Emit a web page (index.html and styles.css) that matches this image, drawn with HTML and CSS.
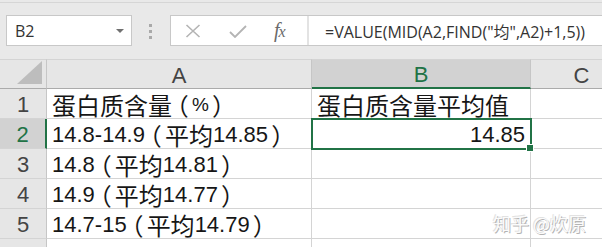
FILE: index.html
```html
<!DOCTYPE html>
<html lang="zh-CN">
<head>
<meta charset="utf-8">
<title>Excel</title>
<link rel="stylesheet" href="styles.css">
</head>
<body>
<div class="app">
  <div class="toolbar">
    <div class="namebox">
      <span class="namebox-text">B2</span>
      <span class="namebox-arrow"></span>
    </div>
    <div class="grip"><i></i><i></i><i></i></div>
    <div class="formula">
      <div class="formula-icons">
        <svg class="ico ico-x" width="16" height="14" viewBox="0 0 16 14"><path d="M1.5 1 L14.5 13 M14.5 1 L1.5 13" stroke="#b4b4b4" stroke-width="1.6" fill="none"/></svg>
        <svg class="ico ico-ok" width="18" height="13" viewBox="0 0 18 13"><path d="M1 7 L6 12 L17 1" stroke="#b4b4b4" stroke-width="1.8" fill="none"/></svg>
        <span class="fx">f<span class="fx-x">x</span></span>
      </div>
      <div class="formula-text">=VALUE(MID(A2,FIND("均",A2)+1,5))</div>
    </div>
  </div>

  <div class="sheet">
    <div class="corner"><svg width="26" height="24" viewBox="0 0 26 24"><polygon points="25,0 25,23 0,23" fill="#bdbdbd"/></svg></div>
    <div class="colhead">A</div>
    <div class="colhead is-sel">B</div>
    <div class="colhead">C</div>

    <div class="rowhead">1</div>
    <div class="cell"><span class="zh">蛋白质含量</span><span class="zh paren">（</span><span class="pct">%</span><span class="zh paren">）</span></div>
    <div class="cell"><span class="zh">蛋白质含量平均值</span></div>
    <div class="cell"></div>

    <div class="rowhead is-sel">2</div>
    <div class="cell">14.8-14.9<span class="zh paren">（</span><span class="zh">平均</span>14.85<span class="zh paren">）</span></div>
    <div class="cell num is-active">14.85</div>
    <div class="cell"></div>

    <div class="rowhead">3</div>
    <div class="cell">14.8<span class="zh paren">（</span><span class="zh">平均</span>14.81<span class="zh paren">）</span></div>
    <div class="cell"></div>
    <div class="cell"></div>

    <div class="rowhead">4</div>
    <div class="cell">14.9<span class="zh paren">（</span><span class="zh">平均</span>14.77<span class="zh paren">）</span></div>
    <div class="cell"></div>
    <div class="cell"></div>

    <div class="rowhead">5</div>
    <div class="cell">14.7-15<span class="zh paren">（</span><span class="zh">平均</span>14.79<span class="zh paren">）</span></div>
    <div class="cell"></div>
    <div class="cell"></div>

    <div class="rowhead"></div>
    <div class="cell"></div>
    <div class="cell"></div>
    <div class="cell"></div>
  </div>

  <div class="watermark">知乎 @炊原</div>
</div>
</body>
</html>
```

FILE: styles.css
```css
* { box-sizing: border-box; }
html, body { margin: 0; padding: 0; }
body {
  width: 602px;
  height: 247px;
  overflow: hidden;
  background: #ffffff;
  font-family: "Liberation Sans", "Noto Sans CJK SC", sans-serif;
}
.app {
  position: relative;
  width: 602px;
  height: 247px;
  overflow: hidden;
  background: #e9e9e9;
  padding-top: 2px;
}

/* toolbar */
.toolbar {
  height: 57px;
  border-top: 1px solid #d6d6d6;
  display: flex;
  align-items: flex-start;
  padding: 12px 0 0 6px;
}
.namebox {
  width: 126px;
  height: 31px;
  background: #fff;
  border: 1px solid #c8c8c8;
  display: flex;
  align-items: center;
  justify-content: space-between;
  padding: 0 7px 0 8px;
}
.namebox-text {
  font-family: "Open Sans", "Noto Sans", sans-serif;
  font-size: 16px;
  color: #333;
}
.namebox-arrow {
  width: 0; height: 0;
  border-left: 4px solid transparent;
  border-right: 4px solid transparent;
  border-top: 4px solid #707070;
  margin-top: 1px;
}
.grip {
  width: 4px;
  margin: 9px 17px 0 17px;
  display: flex;
  flex-direction: column;
  gap: 3px;
}
.grip i {
  display: block;
  width: 3px; height: 3px;
  background: #a9a9a9;
}
.formula {
  flex: 1;
  height: 31px;
  display: flex;
  border: 1px solid #c8c8c8;
  border-right: none;
  background: #fff;
}
.formula-icons {
  width: 136px;
  display: flex;
  align-items: center;
  padding-left: 14px;
}
.ico-x { margin-right: 28px; }
.ico-ok { margin-right: 27px; margin-top: 1px; }
.fx {
  font-family: "Liberation Serif", serif;
  font-style: italic;
  font-size: 20px;
  color: #6a6a6a;
  letter-spacing: -1px;
}
.fx-x { font-size: 16px; }
.formula-text {
  flex: 1;
  border-left: 2px solid #e3e3e3;
  padding-left: 16px;
  display: flex;
  align-items: center;
  font-family: "Open Sans", "Noto Sans CJK SC", sans-serif;
  font-size: 16px;
  color: #333;
  white-space: nowrap;
}

/* sheet */
.sheet {
  display: grid;
  grid-template-columns: 47px 265px 219px 102px;
  grid-template-rows: 30px repeat(6, 30px);
}
.corner {
  background: #e6e6e6;
  border-top: 1px solid #d4d4d4;
  border-right: 1px solid #c6c6c6;
  border-bottom: 1px solid #ababab;
  display: flex;
  align-items: flex-end;
  justify-content: flex-end;
  padding: 0 3px 3px 0;
}
.corner svg { display: block; }
.colhead {
  background: #e6e6e6;
  border-top: 1px solid #d4d4d4;
  border-right: 1px solid #c6c6c6;
  border-bottom: 1px solid #ababab;
  display: flex;
  align-items: center;
  justify-content: center;
  font-size: 22px;
  line-height: 24px;
  color: #444;
  padding-top: 3px;
}
.colhead.is-sel {
  background: #d2d2d2;
  color: #217346;
  border-bottom: 2px solid #217346;
}
.rowhead {
  background: #e6e6e6;
  border-right: 1px solid #c6c6c6;
  border-bottom: 1px solid #d4d4d4;
  display: flex;
  align-items: center;
  justify-content: center;
  font-size: 22px;
  line-height: 24px;
  color: #444;
  padding-top: 3px;
}
.rowhead.is-sel {
  background: #d2d2d2;
  color: #217346;
  border-right: 2px solid #217346;
}
.cell {
  background: #fff;
  border-right: 1px solid #d4d4d4;
  border-bottom: 1px solid #d4d4d4;
  display: flex;
  align-items: center;
  padding: 3px 0 0 5px;
  font-size: 22px;
  line-height: 24px;
  color: #161616;
  white-space: nowrap;
}
.zh {
  display: inline-block;
  font-family: "Noto Sans CJK SC", sans-serif;
  font-size: 24px;
  line-height: 24px;
}
.zh.paren {
  font-feature-settings: "palt" 1;
  padding: 0 4px;
}
.pct { font-size: 19px; }
.cell.num { justify-content: flex-end; padding-right: 5px; }
.cell.is-active {
  position: relative;
  outline: 2px solid #217346;
  outline-offset: -1px;
}
.cell.is-active::after {
  content: "";
  position: absolute;
  right: -4px;
  bottom: -4px;
  width: 6px;
  height: 6px;
  background: #217346;
  border: 1px solid #fff;
}

.watermark {
  position: absolute;
  left: 493px;
  top: 211px;
  font-family: "Noto Sans CJK SC", sans-serif;
  font-size: 18px;
  line-height: 24px;
  color: #fbfbfb;
  text-shadow: 1px 1px 0 #b4b4b4, -1px -1px 0 #e2e2e2;
  white-space: nowrap;
}
```
